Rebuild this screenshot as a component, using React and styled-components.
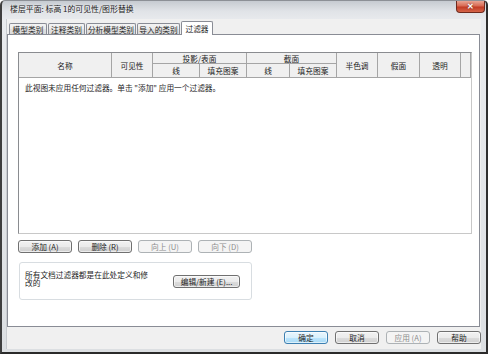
import React from 'react';
import styled, { createGlobalStyle, css } from 'styled-components';

const GlobalStyle = createGlobalStyle`
  html, body {
    margin: 0;
    padding: 0;
    overflow: hidden;
    background: #ffffff;
  }
`;

const FONT = `"Noto Sans CJK SC", "Liberation Sans", sans-serif`;

const Window = styled.div`
  box-sizing: border-box;
  width: 488px;
  height: 354px;
  display: flex;
  flex-direction: column;
  border-style: solid;
  border-width: 1px 2px 2px 2px;
  border-color: #8c9096 #2e2e2e #2a2a2a #3e3e3e;
  border-radius: 5px 5px 0 0;
  background: linear-gradient(#c6cbd1 0px, #e0e3e7 10px, #e9ebee 20px, #dcdfe2 100%);
  font-family: ${FONT};
  font-size: 7.7px;
  color: #1e1e1e;
`;

const TitleBar = styled.div`
  height: 18px;
  display: flex;
  align-items: flex-start;
  padding-left: 8px;
`;

const Title = styled.div`
  font-size: 7.9px;
  line-height: 9px;
  margin-top: 3px;
  color: #222;
  text-shadow: 0 0 3px rgba(255, 255, 255, 0.9);
`;

const CloseButton = styled.div`
  box-sizing: border-box;
  margin-left: auto;
  margin-right: 1px;
  width: 29px;
  height: 12px;
  border: 1px solid #6e2a1e;
  border-top: none;
  border-radius: 0 0 4px 4px;
  background: linear-gradient(#e9a594 0%, #d86a53 45%, #c23b24 55%, #d5654a 100%);
  display: flex;
  align-items: center;
  justify-content: center;
  color: #fff;
  font-family: "Liberation Sans", sans-serif;
  font-weight: bold;
  font-size: 8px;
  line-height: 1;
  text-shadow: 0 0 2px #6e2a1e;
`;

const Body = styled.div`
  flex: 1;
  display: flex;
  flex-direction: column;
  margin: 0 5px 3px 4px;
  padding: 2px 1px 0 0;
  background: #f0f0f0;
  border-left: 1px solid #c9ccd0;
`;

const TabRow = styled.div`
  height: 13px;
  display: flex;
  align-items: flex-end;
  padding-left: 2px;
`;

const Tab = styled.div`
  box-sizing: border-box;
  width: ${(p) => p.$w}px;
  height: ${(p) => (p.$active ? 14 : 11)}px;
  margin-right: 1px;
  border: 1px solid #898c95;
  border-bottom: none;
  border-radius: 2px 2px 0 0;
  display: flex;
  align-items: center;
  justify-content: center;
  line-height: 9px;
  white-space: nowrap;
  ${(p) =>
    p.$active
      ? css`
          margin-bottom: -1px;
          position: relative;
          z-index: 1;
          background: #ffffff;
        `
      : css`
          background: linear-gradient(#f3f3f3, #ebebeb 50%, #e1e1e1 50%, #d9d9d9);
        `}
`;

const Panel = styled.div`
  box-sizing: border-box;
  height: 293px;
  border: 1px solid #898c95;
  background: #ffffff;
  padding: 17px 7px 0 10px;
  display: flex;
  flex-direction: column;
`;

const Table = styled.div`
  box-sizing: border-box;
  width: 454px;
  height: 182px;
  border: 1px solid #8a8c90;
  border-right-color: #c8c8c8;
  border-bottom-color: #c8c8c8;
  display: flex;
  flex-direction: column;
`;

const Header = styled.div`
  display: grid;
  grid-template-columns: 93px 41px 47px 47px 43px 47px 41px 42px 41px 10px;
  grid-template-rows: 11px 14px;
  background: #f0f0f0;
`;

const HeadCell = styled.div`
  box-sizing: border-box;
  grid-column: ${(p) => p.$col || 'auto'};
  grid-row: ${(p) => p.$row || 'auto'};
  border-right: 1px solid #a5a5a5;
  border-bottom: 1px solid #a5a5a5;
  display: flex;
  align-items: center;
  justify-content: center;
  line-height: 9px;
  white-space: nowrap;
  color: #222;
`;

const Message = styled.div`
  padding: 5px 0 0 6px;
  line-height: 10px;
  white-space: nowrap;
`;

const ButtonRow = styled.div`
  display: flex;
  gap: 6px;
  margin-top: 6px;
`;

const Button = styled.div`
  box-sizing: border-box;
  width: ${(p) => p.$w}px;
  height: 13px;
  border: 1px solid #707070;
  border-radius: 3px;
  background: linear-gradient(#f2f2f2, #ebebeb 50%, #dddddd 50%, #cfcfcf);
  display: flex;
  align-items: center;
  justify-content: center;
  line-height: 9px;
  white-space: nowrap;
  color: #1e1e1e;
  box-shadow: inset 0 0 0 1px rgba(255, 255, 255, 0.6);
  ${(p) =>
    p.$default &&
    css`
      border-color: #3c7fb1;
      background: linear-gradient(#eaf6fd, #d9f0fc 50%, #bee6fd 50%, #a7d9f5);
    `}
  ${(p) =>
    p.$disabled &&
    css`
      border-color: #adb2b5;
      background: #f4f4f4;
      color: #8d8d8d;
      box-shadow: none;
    `}
`;

const GroupBox = styled.div`
  box-sizing: border-box;
  width: 233px;
  height: 38px;
  margin: 9px 0 0 1px;
  border: 1px solid #d8dde1;
  border-radius: 3px;
  display: flex;
  align-items: center;
  justify-content: space-between;
  padding: 0 11px 0 5px;
`;

const GroupText = styled.div`
  width: 126px;
  line-height: 8.5px;
  padding-bottom: 4px;
`;

const Footer = styled.div`
  flex: 1;
  display: flex;
  justify-content: flex-end;
  align-items: center;
  gap: 7px;
  margin-right: -1px;
  padding-bottom: 1px;
`;

export default function App() {
  return (
    <>
      <GlobalStyle />
      <Window>
        <TitleBar>
          <Title>楼层平面: 标高 1的可见性/图形替换</Title>
          <CloseButton>✕</CloseButton>
        </TitleBar>
        <Body>
          <TabRow>
            <Tab $w={38}>模型类别</Tab>
            <Tab $w={37}>注释类别</Tab>
            <Tab $w={50}>分析模型类别</Tab>
            <Tab $w={43}>导入的类别</Tab>
            <Tab $w={32} $active>
              过滤器
            </Tab>
          </TabRow>
          <Panel>
            <Table>
              <Header>
                <HeadCell $row="span 2">名称</HeadCell>
                <HeadCell $row="span 2">可见性</HeadCell>
                <HeadCell $col="span 2">投影/表面</HeadCell>
                <HeadCell $col="span 2">截面</HeadCell>
                <HeadCell $row="span 2">半色调</HeadCell>
                <HeadCell $row="span 2">假面</HeadCell>
                <HeadCell $row="span 2">透明</HeadCell>
                <HeadCell $row="span 2" />
                <HeadCell>线</HeadCell>
                <HeadCell>填充图案</HeadCell>
                <HeadCell>线</HeadCell>
                <HeadCell>填充图案</HeadCell>
              </Header>
              <Message>此视图未应用任何过滤器。单击 "添加" 应用一个过滤器。</Message>
            </Table>
            <ButtonRow>
              <Button $w={54}>添加 (A)</Button>
              <Button $w={54}>删除 (R)</Button>
              <Button $w={54} $disabled>
                向上 (U)
              </Button>
              <Button $w={54} $disabled>
                向下 (D)
              </Button>
            </ButtonRow>
            <GroupBox>
              <GroupText>所有文档过滤器都是在此处定义和修改的</GroupText>
              <Button $w={67}>编辑/新建 (E)...</Button>
            </GroupBox>
          </Panel>
          <Footer>
            <Button $w={44} $default>
              确定
            </Button>
            <Button $w={44}>取消</Button>
            <Button $w={44} $disabled>
              应用 (A)
            </Button>
            <Button $w={44}>帮助</Button>
          </Footer>
        </Body>
      </Window>
    </>
  );
}
